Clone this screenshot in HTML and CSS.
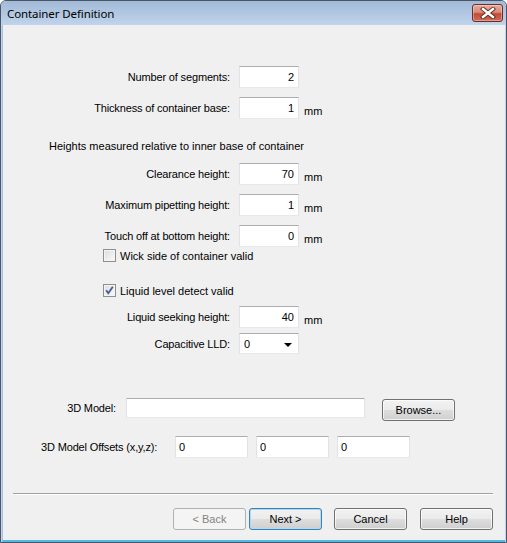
FILE: index.html
```html
<!DOCTYPE html>
<html>
<head>
<meta charset="utf-8">
<link rel="stylesheet" href="styles.css">
</head>
<body>
<div class="window">
  <div class="titlebar">
    <span class="title">Container Definition</span>
    <div class="close">
      <svg width="16" height="12" viewBox="0 0 16 12">
        <path d="M3 2 L13 10 M13 2 L3 10" stroke="#5a2a22" stroke-width="4.2" stroke-linecap="square" fill="none"/>
        <path d="M3 2 L13 10 M13 2 L3 10" stroke="#ffffff" stroke-width="2.4" stroke-linecap="square" fill="none"/>
      </svg>
    </div>
  </div>
  <div class="client">
    <div class="row r-seg">
      <span class="lbl">Number of segments:</span>
      <div class="tb num">2</div>
    </div>
    <div class="row r-thick">
      <span class="lbl">Thickness of container base:</span>
      <div class="tb num">1</div>
      <span class="unit">mm</span>
    </div>
    <div class="heading">Heights measured relative to inner base of container</div>
    <div class="row r-clear">
      <span class="lbl">Clearance height:</span>
      <div class="tb num">70</div>
      <span class="unit">mm</span>
    </div>
    <div class="row r-next">
      <span class="lbl">Maximum pipetting height:</span>
      <div class="tb num">1</div>
      <span class="unit">mm</span>
    </div>
    <div class="row r-next">
      <span class="lbl">Touch off at bottom height:</span>
      <div class="tb num">0</div>
      <span class="unit">mm</span>
    </div>
    <div class="check r-wick">
      <span class="box"></span>
      <span class="ctext">Wick side of container valid</span>
    </div>
    <div class="check r-lld">
      <span class="box">
        <svg width="11" height="11" viewBox="0 0 11 11">
          <path d="M2.2 5.2 L4.3 8.2 L8.8 1.8" stroke="#3f5b9a" stroke-width="1.8" fill="none"/>
        </svg>
      </span>
      <span class="ctext">Liquid level detect valid</span>
    </div>
    <div class="row r-seek">
      <span class="lbl">Liquid seeking height:</span>
      <div class="tb num">40</div>
      <span class="unit">mm</span>
    </div>
    <div class="row r-cap">
      <span class="lbl">Capacitive LLD:</span>
      <div class="combo"><span>0</span><span class="arrow"></span></div>
    </div>
    <div class="row r-model">
      <span class="lbl lbl-model">3D Model:</span>
      <div class="tb model"></div>
      <div class="btn browse">Browse...</div>
    </div>
    <div class="row r-off">
      <span class="lbl-off">3D Model Offsets (x,y,z):</span>
      <div class="tb off">0</div>
      <div class="tb off">0</div>
      <div class="tb off">0</div>
    </div>
    <div class="sep"></div>
    <div class="buttons">
      <div class="btn disabled b-back">&lt; Back</div>
      <div class="btn default b-next">Next &gt;</div>
      <div class="btn b-cancel">Cancel</div>
      <div class="btn b-help">Help</div>
    </div>
  </div>
</div>
</body>
</html>
```

FILE: styles.css
```css
* { box-sizing: border-box; }
html, body { margin: 0; padding: 0; background: #ffffff; }
body { font-family: "Liberation Sans", Arial, sans-serif; font-size: 11px; color: #000; }

.window {
  width: 507px;
  height: 543px;
  border: 1px solid #4a5666;
  border-radius: 6px 6px 0 0;
  background: #c2d5ea;
  display: flex;
  flex-direction: column;
  overflow: hidden;
}

.titlebar {
  height: 24px;
  flex: none;
  background: linear-gradient(#a2bad7, #c0d4eb);
  display: flex;
  align-items: center;
  padding-left: 6px;
  position: relative;
}
.title {
  font-family: "Noto Sans", "Open Sans", sans-serif;
  font-size: 11.5px;
  color: #000;
  letter-spacing: -0.1px;
}
.close {
  position: absolute;
  right: 3px;
  top: 3px;
  width: 31px;
  height: 18px;
  border: 1px solid #6a2d28;
  border-radius: 3px;
  background: linear-gradient(#e8a99c 0%, #d98b79 45%, #c24a36 55%, #cf6d58 100%);
  box-shadow: inset 0 0 0 1px rgba(255,255,255,0.35);
  display: flex;
  align-items: center;
  justify-content: center;
}

.client {
  flex: 1;
  margin: 0 1px 0 1px;
  background: #f0f0f0;
  border-left: 1px solid #9fc3e6;
  border-bottom: 2px solid #4dbbe6;
  display: flex;
  flex-direction: column;
}

.row { display: flex; align-items: center; }
.lbl { width: 227px; text-align: right; margin-right: 9px; white-space: nowrap; letter-spacing: -0.15px; }
.unit { margin-left: 5px; align-self: flex-end; margin-bottom: 2px; }

.tb {
  height: 22px;
  width: 60px;
  background: #fff;
  border: 1px solid;
  border-color: #abadb3 #e2e3ea #e3e9ef #e2e3ea;
  display: flex;
  align-items: center;
  padding: 0 4px 0 3px;
}
.tb.num { justify-content: flex-end; }

.r-seg { margin-top: 41px; }
.r-thick { margin-top: 9px; }
.heading { margin-top: 21px; padding-left: 46px; height: 13px; line-height: 13px; }
.r-clear { margin-top: 10px; }
.r-next { margin-top: 9px; }

.check { display: flex; align-items: center; padding-left: 100px; height: 13px; }
.r-wick { margin-top: 2px; }
.r-lld { margin-top: 22px; }
.box {
  width: 13px; height: 13px;
  border: 1px solid #8e8f8f;
  background: linear-gradient(135deg, #dcdcdc, #fbfbfb);
  box-shadow: inset 0 0 0 1px #f4f4f4;
  display: flex; align-items: center; justify-content: center;
}
.ctext { margin-left: 4px; }

.r-seek { margin-top: 9px; }
.r-cap { margin-top: 5px; }
.combo {
  width: 60px; height: 21px;
  background: #fff;
  border: 1px solid;
  border-color: #abadb3 #e2e3ea #e3e9ef #e2e3ea;
  display: flex; align-items: center; justify-content: space-between;
  padding: 0 6px 0 4px;
}
.arrow {
  width: 0; height: 0;
  border-left: 4px solid transparent;
  border-right: 4px solid transparent;
  border-top: 4px solid #000;
  margin-top: 2px;
}

.r-model { margin-top: 44px; align-items: flex-start; }
.lbl-model { width: 113px; margin-right: 10px; height: 20px; line-height: 20px; }
.tb.model { width: 239px; height: 20px; }
.browse { margin-left: 17px; margin-top: 1px; width: 73px; height: 20px; }

.r-off { margin-top: 15px; padding-left: 38px; }
.lbl-off { width: 134px; white-space: nowrap; letter-spacing: -0.15px; }
.tb.off { width: 73px; margin-right: 8px; }

.sep {
  margin: 35px 0 0 10px;
  width: 480px;
  height: 2px;
  border-top: 1px solid #a0a0a0;
  border-bottom: 1px solid #ffffff;
}

.btn {
  height: 22px;
  border: 1px solid #707070;
  border-radius: 3px;
  background: linear-gradient(#f2f2f2 0%, #ebebeb 48%, #dddddd 52%, #cfcfcf 100%);
  box-shadow: inset 0 0 0 1px rgba(255,255,255,0.7);
  display: flex; align-items: center; justify-content: center;
}
.btn.disabled {
  border-color: #adb2b5;
  background: #f4f4f4;
  color: #838383;
  box-shadow: none;
}
.btn.default { border-color: #3c7fb1; box-shadow: inset 0 0 0 1px #a9dcf7; }

.buttons { display: flex; margin-top: 13px; }
.b-back { margin-left: 170px; width: 73px; }
.b-next { margin-left: 3px; width: 73px; }
.b-cancel { margin-left: 12px; width: 73px; }
.b-help { margin-left: 13px; width: 73px; }
```
